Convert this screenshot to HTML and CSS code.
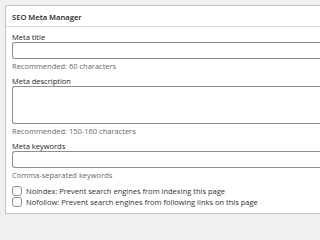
FILE: index.html
```html
<!DOCTYPE html>
<html>
<head>
<meta charset="utf-8">
<link rel="stylesheet" href="styles.css">
</head>
<body>
<div class="page">
  <div class="box">
    <div class="box-head">SEO Meta Manager</div>
    <div class="box-body">
      <div class="field">
        <label class="label">Meta title</label>
        <div class="input"></div>
        <div class="hint">Recommended: 60 characters</div>
      </div>
      <div class="field">
        <label class="label">Meta description</label>
        <div class="input area"></div>
        <div class="hint">Recommended: 150-160 characters</div>
      </div>
      <div class="field">
        <label class="label">Meta keywords</label>
        <div class="input"></div>
        <div class="hint">Comma-separated keywords</div>
      </div>
      <div class="checks">
        <div class="check"><span class="cb"></span><span>Noindex: Prevent search engines from indexing this page</span></div>
        <div class="check"><span class="cb"></span><span>Nofollow: Prevent search engines from following links on this page</span></div>
      </div>
    </div>
  </div>
</div>
</body>
</html>
```
FILE: styles.css
```css
html, body {
  margin: 0;
  padding: 0;
  background: #f0f0f1;
}
* {
  box-sizing: border-box;
}
.page {
  padding: 5px 0 0 5px;
  font-family: "Open Sans", "Noto Sans", sans-serif;
  font-size: 7.5px;
  color: #1d2327;
}
.box {
  background: #fff;
  border: 1px solid #c3c4c7;
  border-right: none;
}
.box-head {
  font-weight: 600;
  font-size: 7.6px;
  padding: 1px 6px 0;
  height: 21px;
  line-height: 20px;
  border-bottom: 1px solid #dcdcde;
}
.box-body {
  padding: 5px 0 6px 6px;
}
.field {
  display: flex;
  flex-direction: column;
}
.label {
  line-height: 10px;
}
.input {
  height: 17px;
  border: 1px solid #8c8f94;
  border-right: none;
  border-radius: 3px 0 0 3px;
  background: #fff;
}
.input.area {
  height: 38px;
}
.hint {
  color: #646970;
  line-height: 11px;
  margin: 2px 0 4px;
}
.checks {
  display: flex;
  flex-direction: column;
  gap: 1px;
  margin-top: 1px;
}
.check {
  display: flex;
  align-items: center;
  gap: 4px;
  height: 10px;
  line-height: 10px;
  white-space: nowrap;
  color: #2c3338;
}
.cb {
  width: 10px;
  height: 10px;
  border: 1px solid #8c8f94;
  border-radius: 3px;
  background: #fff;
  flex: none;
}
```
